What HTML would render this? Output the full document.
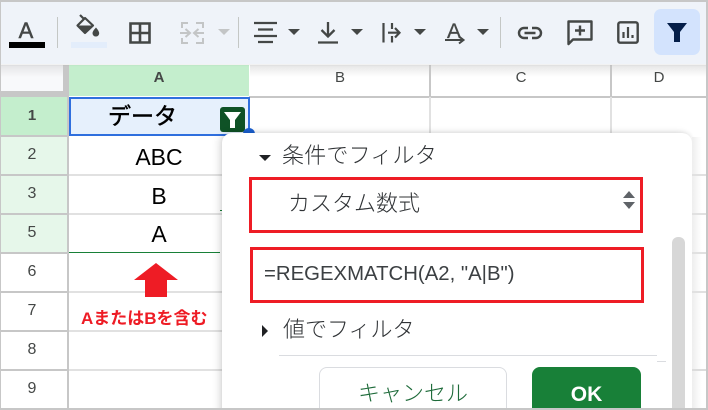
<!DOCTYPE html>
<html style="width:708px;height:410px;overflow:hidden"><head><meta charset="utf-8"><style>
html,body{margin:0;padding:0}
body{width:708px;height:410px;overflow:hidden;background:#fff;position:relative;font-family:"Liberation Sans","Noto Sans CJK JP",sans-serif}
.a{position:absolute}
.t{position:absolute;white-space:nowrap;line-height:1}
.rh{position:absolute;left:1px;width:62px;text-align:center;font-size:16px;color:#444746}
.c{position:absolute;left:69px;width:180px;text-align:center;font-size:23px;color:#000;line-height:1}
svg{position:absolute;overflow:visible}
</style></head><body>
<!-- grid -->
<div class="a" style="left:1px;top:65px;width:62px;height:27px;background:linear-gradient(#e4e4e6,#f8f9fb 45%)"></div>
<div class="a" style="left:63px;top:65px;width:6px;height:31px;background:#c7c7c7"></div>
<div class="a" style="left:1px;top:91px;width:68px;height:6px;background:#c7c7c7"></div>
<div class="a" style="left:69px;top:65px;width:180px;height:31px;background:#c4eecd"></div>
<div class="a" style="left:250px;top:65px;width:458px;height:12px;background:linear-gradient(#e6e6e6,#fff)"></div>
<div class="a" style="left:249px;top:96px;width:459px;height:2px;background:#c7c7c7"></div>
<div class="a" style="left:429px;top:65px;width:2px;height:32px;background:#c7c7c7"></div>
<div class="a" style="left:610px;top:65px;width:2px;height:32px;background:#c7c7c7"></div>
<div class="a" style="left:429px;top:97px;width:2px;height:40px;background:#e1e1e1"></div>
<div class="a" style="left:610px;top:97px;width:2px;height:40px;background:#e1e1e1"></div>
<div class="t" style="left:69px;width:180px;top:70px;text-align:center;font-size:15px;font-weight:bold;color:#444746">A</div>
<div class="t" style="left:250px;width:180px;top:70px;text-align:center;font-size:15px;color:#444746">B</div>
<div class="t" style="left:431px;width:180px;top:70px;text-align:center;font-size:15px;color:#444746">C</div>
<div class="t" style="left:612px;width:94px;top:70px;text-align:center;font-size:15px;color:#444746">D</div>
<!-- row header -->
<div class="a" style="left:1px;top:97px;width:66px;height:38px;background:#c4eecd"></div>
<div class="a" style="left:1px;top:137px;width:66px;height:116px;background:#e6f7ea"></div>
<div class="a" style="left:67px;top:97px;width:2px;height:312px;background:#c7c7c7"></div>
<div class="a" style="left:1px;top:135px;width:67px;height:2px;background:#c7c7c7"></div>
<div class="a" style="left:1px;top:174px;width:67px;height:2px;background:#c7c7c7"></div>
<div class="a" style="left:1px;top:213px;width:67px;height:2px;background:#c7c7c7"></div>
<div class="a" style="left:1px;top:252px;width:67px;height:2px;background:#c7c7c7"></div>
<div class="a" style="left:1px;top:291px;width:67px;height:2px;background:#c7c7c7"></div>
<div class="a" style="left:1px;top:330px;width:67px;height:2px;background:#c7c7c7"></div>
<div class="a" style="left:1px;top:369px;width:67px;height:2px;background:#c7c7c7"></div>
<div class="a" style="left:69px;top:174px;width:160px;height:2px;background:#e1e1e1"></div>
<div class="a" style="left:69px;top:213px;width:160px;height:2px;background:#e1e1e1"></div>
<div class="a" style="left:69px;top:252px;width:151px;height:1px;background:#188038"></div>
<div class="a" style="left:220px;top:210px;width:30px;height:1px;background:#188038"></div>
<div class="a" style="left:69px;top:291px;width:160px;height:2px;background:#e1e1e1"></div>
<div class="a" style="left:69px;top:330px;width:160px;height:2px;background:#e1e1e1"></div>
<div class="a" style="left:69px;top:369px;width:160px;height:2px;background:#e1e1e1"></div>
<div class="t rh" style="top:108px;font-size:15px;font-weight:bold">1</div>
<div class="t rh" style="top:147px">2</div>
<div class="t rh" style="top:186px">3</div>
<div class="t rh" style="top:225px">5</div>
<div class="t rh" style="top:264px">6</div>
<div class="t rh" style="top:303px">7</div>
<div class="t rh" style="top:342px">8</div>
<div class="t rh" style="top:381px">9</div>
<!-- A1 -->
<div class="a" style="left:69px;top:97px;width:177px;height:35px;background:#e6f0fc;border:2px solid #2f6fde"></div>
<div class="t" style="left:108px;top:105px;font-size:23px;color:#000;-webkit-text-stroke:.5px #000">データ</div>
<div class="a" style="left:220px;top:107px;width:25px;height:25px;border-radius:3px;background:#0f5226"></div>
<svg style="left:220px;top:107px" width="25" height="25"><path d="M4 5H21L15 13V21H10V13Z" fill="#fff"/></svg>
<div class="a" style="left:243px;top:128px;width:12px;height:12px;border-radius:50%;background:#1a5fd0"></div>
<div class="c" style="top:146px">ABC</div>
<div class="c" style="top:185px">B</div>
<div class="c" style="top:223px">A</div>
<!-- arrow -->
<svg style="left:134px;top:263px" width="44" height="35"><path d="M22 0L44 17H33V34H11V17H0Z" fill="#ee1c25"/></svg>
<div class="t" style="left:81px;top:310px;font-size:17px;font-weight:bold;color:#ee1c25">AまたはBを含む</div>
<!-- popup -->
<div class="a" style="left:222px;top:133px;width:470px;height:290px;background:#fff;border-radius:10px;box-shadow:-3px 0 8px rgba(0,0,0,.12),0 -1px 4px rgba(0,0,0,.08)"></div>
<div class="a" style="left:692px;top:137px;width:16px;height:272px;background:linear-gradient(90deg,#eee,#fff 60%)"></div>
<div class="a" style="left:692px;top:174px;width:16px;height:2px;background:#e1e1e1"></div>
<div class="a" style="left:692px;top:213px;width:16px;height:2px;background:#e1e1e1"></div>
<div class="a" style="left:692px;top:252px;width:16px;height:2px;background:#e1e1e1"></div>
<div class="a" style="left:692px;top:291px;width:16px;height:2px;background:#e1e1e1"></div>
<div class="a" style="left:692px;top:369px;width:16px;height:2px;background:#dcdcdc"></div>
<svg style="left:259px;top:155px" width="12" height="7"><path d="M0 0H12L6 6Z" fill="#202124"/></svg>
<div class="t" style="left:282px;top:145px;font-size:22px;font-weight:300;color:#303336;letter-spacing:.2px">条件でフィルタ</div>
<div class="a" style="left:249px;top:177px;width:388px;height:50px;border:3px solid #ee1c25"></div>
<div class="t" style="left:288px;top:193px;font-size:22px;font-weight:300;color:#303336">カスタム数式</div>
<svg style="left:623px;top:191px" width="12" height="18"><path d="M0 7L6 0L12 7Z M0 11H12L6 18Z" fill="#5f6368"/></svg>
<div class="a" style="left:250px;top:247px;width:388px;height:50px;border:3px solid #ee1c25"></div>
<div class="t" style="left:264px;top:264px;font-size:20.35px;color:#3c4043">=REGEXMATCH(A2, "A|B")</div>
<svg style="left:262px;top:325px" width="7" height="12"><path d="M0 0L6 6L0 12Z" fill="#202124"/></svg>
<div class="t" style="left:283px;top:319px;font-size:22px;font-weight:300;color:#303336">値でフィルタ</div>
<div class="a" style="left:279px;top:355px;width:378px;height:1px;background:#dadce0"></div>
<div class="a" style="left:657px;top:361px;width:9px;height:1px;background:#dadce0"></div>
<div class="a" style="left:672px;top:237px;width:13px;height:172px;background:#d7d7d7;border-radius:6px 6px 0 0"></div>
<div class="a" style="left:319px;top:367px;width:186px;height:50px;border:1px solid #dadce0;border-radius:8px;background:#fff"></div>
<div class="t" style="left:319px;width:188px;top:383px;text-align:center;font-size:22px;font-weight:300;color:#1e6b3a">キャンセル</div>
<div class="a" style="left:532px;top:367px;width:109px;height:50px;background:#188038;border-radius:8px"></div>
<div class="t" style="left:532px;width:109px;top:384px;text-align:center;font-size:21px;font-weight:bold;color:#fff">OK</div>
<!-- toolbar -->
<div class="a" style="left:0;top:0;width:708px;height:64px;background:#eff3f9;border-top:2px solid #c7c7c7;box-sizing:border-box;box-shadow:0 1px 2px rgba(0,0,0,.08)"></div>
<div class="t" style="left:15px;top:20px;width:22px;text-align:center;font-size:22px;color:#444746;-webkit-text-stroke:.5px #444746">A</div>
<div class="a" style="left:9px;top:42px;width:36px;height:6px;background:#000"></div>
<div class="a" style="left:57px;top:17px;width:1px;height:31px;background:#c4c7c5"></div>
<svg style="left:76px;top:14px" width="26" height="24"><path d="M4 1L8 5" stroke="#444746" stroke-width="2.200" fill="none"/><path d="M9 4L17 11.500L9 19L1.500 11.500Z" stroke="#444746" stroke-width="2.200" fill="none" stroke-linejoin="round"/><path d="M1.500 11.500H17L9 19Z" fill="#444746"/><path d="M20 13.500C20 13.500 16.500 17 16.500 19.200A3.300 3.300 0 0 0 23.200 19.200C23.200 17 20 13.500 20 13.500Z" fill="#444746"/></svg>
<div class="a" style="left:71px;top:42px;width:36px;height:6px;background:#e3edfb"></div>
<svg style="left:129px;top:22px" width="22" height="22"><path d="M1.500 1.500H20.500V20.500H1.500ZM11 1.500V20.500M1.500 11H20.500" fill="none" stroke="#444746" stroke-width="2.600"/></svg>
<svg style="left:180px;top:22px" width="24" height="22" fill="none" stroke="#c3c5c6" stroke-width="2"><path d="M8 1H2V6M2 16V21H8M16 1H23V6M23 16V21H16M0 11H9M5.500 7L10 11L5.500 15M24 11H15M18.500 7L14 11L18.500 15"/></svg>
<svg style="left:218px;top:29px" width="12" height="6"><path d="M0 0H12L6 6Z" fill="#c3c5c6"/></svg>
<div class="a" style="left:238px;top:17px;width:1px;height:31px;background:#c4c7c5"></div>
<svg style="left:254px;top:21px" width="23" height="23"><path d="M0 2H23M4 8.500H19M0 15H23M4 21H19" stroke="#444746" stroke-width="2.300" fill="none"/></svg>
<svg style="left:288px;top:29px" width="12" height="6"><path d="M0 0H12L6 6Z" fill="#444746"/></svg>
<svg style="left:318px;top:22px" width="20" height="22"><path d="M10 0V14M3.500 8L10 14.500L16.500 8M0 20.500H20" stroke="#444746" stroke-width="2.300" fill="none"/></svg>
<svg style="left:351px;top:29px" width="12" height="6"><path d="M0 0H12L6 6Z" fill="#444746"/></svg>
<svg style="left:382px;top:23px" width="19" height="20"><path d="M1.500 0V19.500M10 0V6M10 13V19.500M6 9.700H17M13 5L17.500 9.700L13 14.500" stroke="#444746" stroke-width="2.200" fill="none"/></svg>
<svg style="left:414px;top:29px" width="12" height="6"><path d="M0 0H12L6 6Z" fill="#444746"/></svg>
<div class="t" style="left:447px;top:21px;font-size:21px;color:#444746;-webkit-text-stroke:.3px #444746">A</div>
<svg style="left:445px;top:36px" width="20" height="9"><path d="M0 4H18M14 0.500L18.500 4L14 7.500" stroke="#444746" stroke-width="2" fill="none"/></svg>
<svg style="left:477px;top:29px" width="12" height="6"><path d="M0 0H12L6 6Z" fill="#444746"/></svg>
<div class="a" style="left:500px;top:17px;width:1px;height:31px;background:#c4c7c5"></div>
<svg style="left:517px;top:26px" width="26" height="14"><path d="M11 2H7A5 5 0 0 0 7 12H11M15 2H19A5 5 0 0 1 19 12H15M7.500 7H18.500" stroke="#444746" stroke-width="2.400" fill="none"/></svg>
<svg style="left:567px;top:20px" width="26" height="26"><path d="M1.500 1.500H24.500V19.500H6L1.500 24Z" stroke="#444746" stroke-width="2.400" fill="none" stroke-linejoin="round"/><path d="M13 5.500V15.500M8 10.500H18" stroke="#444746" stroke-width="2.400"/></svg>
<svg style="left:617px;top:21px" width="22" height="23"><rect x="1.300" y="1.300" width="19.400" height="20.400" rx="2" stroke="#444746" stroke-width="2.400" fill="none"/><path d="M6.500 11V17M11 6V17M15.500 14V17" stroke="#444746" stroke-width="2.200"/></svg>
<div class="a" style="left:654px;top:9px;width:46px;height:46px;border-radius:7px;background:#d3e3fd"></div>
<svg style="left:667px;top:23px" width="20" height="20"><path d="M0 0H20L13 9V19H7V9Z" fill="#041e49"/></svg>
<!-- frame -->
<div class="a" style="left:0;top:0;width:1px;height:410px;background:#c7c7c7"></div>
<div class="a" style="left:0;top:408px;width:708px;height:2px;background:#c7c7c7"></div>
<div class="a" style="left:706px;top:0;width:2px;height:410px;background:#c7c7c7"></div>
</body></html>
